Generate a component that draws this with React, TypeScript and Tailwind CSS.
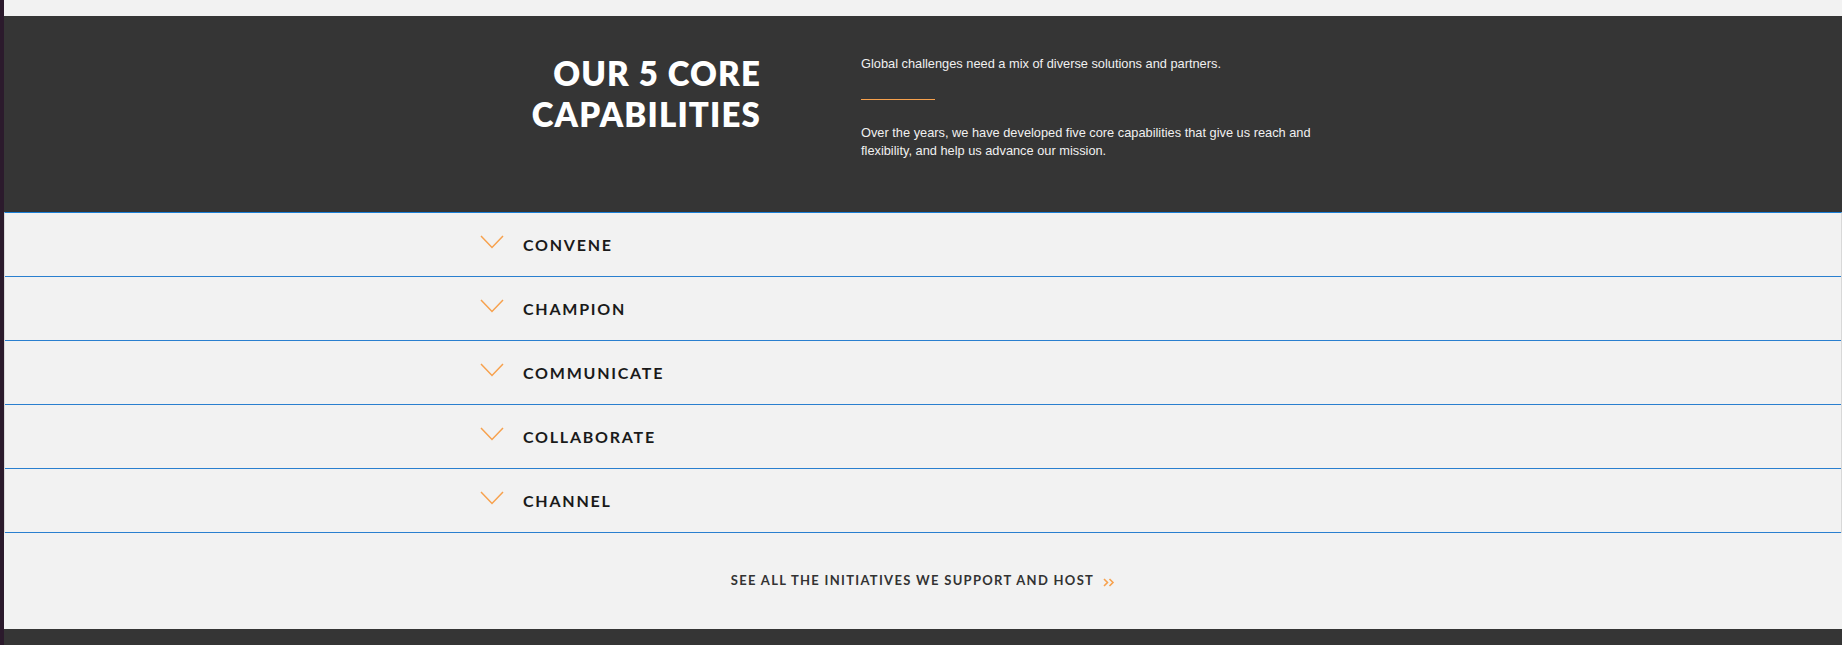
import React from "react";

const capabilities = ["Convene", "Champion", "Communicate", "Collaborate", "Channel"];

const Chevron = () => (
    <svg width="24" height="14" viewBox="0 0 24 14" fill="none" className="shrink-0">
        <path d="M1 1 L12 12.5 L23 1" stroke="#f7a14d" strokeWidth="1.5"/>
    </svg>
);

const DoubleArrow = () => (
    <svg width="12" height="9" viewBox="0 0 12 9" fill="none" className="ml-[9px] mt-[2px]">
        <path d="M1 1 L4.5 4.5 L1 8 M6.5 1 L10 4.5 L6.5 8" stroke="#f7a14d" strokeWidth="1.6"/>
    </svg>
);

export default function App() {
    return (
        <div className="flex min-h-[645px] w-full bg-[#f2f2f2]" style={{fontFamily: "Lato, 'Liberation Sans', sans-serif"}}>
            {/* window edge */}
            <div className="w-[4px] shrink-0 bg-[#2b1a2c]"/>

            <div className="flex flex-1 flex-col">
                <div className="h-[16px]"/>

                {/* header */}
                <div className="h-[196px] bg-[#353535] pt-[37px]">
                    <div className="flex">
                        <div className="w-[757px] shrink-0 text-right">
                            <h2 className="text-[33px] font-extrabold leading-[41px] tracking-[0.035em] text-white">
                                OUR 5 CORE<br/>CAPABILITIES
                            </h2>
                        </div>
                        <div className="ml-[100px] mt-[2px] w-[455px] text-[12.8px] leading-[18.5px] text-[#f0f0f0]"
                             style={{fontFamily: "'Liberation Sans', Arial, sans-serif"}}>
                            <p>Global challenges need a mix of diverse solutions and partners.</p>
                            <div className="mt-[25px] h-px w-[74px] bg-[#f7a14d]"/>
                            <p className="mt-[24px]">
                                Over the years, we have developed five core capabilities that give us reach and flexibility, and help us advance our mission.
                            </p>
                        </div>
                    </div>
                </div>

                {/* accordion */}
                <div className="border-x border-t border-x-[#d8d8d8] border-t-[#1a7fd6]">
                    {capabilities.map((c) => (
                        <button key={c}
                                className="flex h-[64px] w-full items-center border-b border-[#2a7fcf] pl-[475px] text-left">
                            <span className="-mt-[6px]"><Chevron/></span>
                            <span className="ml-[19px] text-[16px] font-bold uppercase tracking-[0.11em] text-[#1a1a1a]">
                                {c}
                            </span>
                        </button>
                    ))}
                </div>

                {/* link */}
                <div className="flex h-[96px] items-center justify-center">
                    <a href="#" className="flex items-center text-[13px] font-bold uppercase tracking-[0.1em] text-[#333]">
                        See all the initiatives we support and host
                        <DoubleArrow/>
                    </a>
                </div>

                <div className="flex-1 bg-[#353535]"/>
            </div>
        </div>
    );
}
